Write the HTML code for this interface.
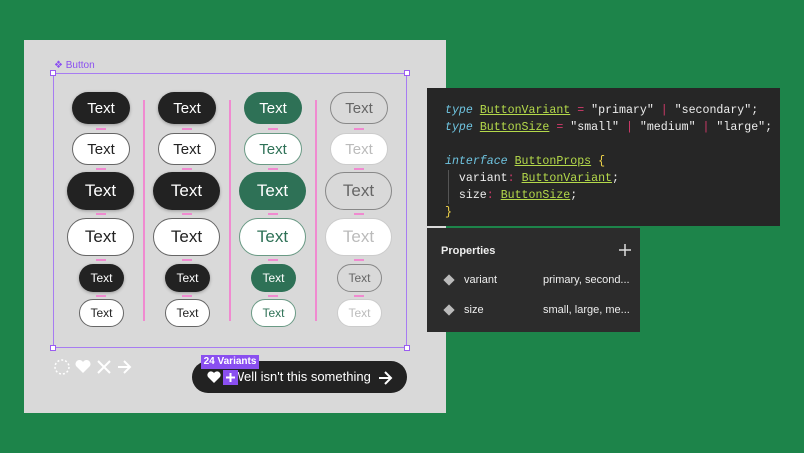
<!DOCTYPE html>
<html><head><style>
*{box-sizing:border-box;margin:0;padding:0}
body{width:804px;height:453px;background:#1d844a;position:relative;overflow:hidden;font-family:"Liberation Sans",sans-serif}
.abs{position:absolute}
.panel{left:24px;top:40px;width:422px;height:373px;background:#d9d9d9}
.b{position:absolute;display:flex;align-items:center;justify-content:center;border-radius:20px;font-size:14px}
.m{width:58px;height:32px;font-size:15px}
.l{width:67px;height:38px;font-size:17px;border-radius:20px}
.s{width:45px;height:28px;font-size:12px}
.d{background:#222;color:#fff;box-shadow:0 1px 3px rgba(0,0,0,.3)}
.w{background:#fff;color:#222;border:1.5px solid #666}
.g{background:#2e7156;color:#fff}
.gw{background:#fff;color:#2e7156;border:1.5px solid #6a9a85}
.o{background:transparent;color:#666;border:1.5px solid #888}
.ow{background:#fff;color:#bbb;border:1.5px solid #ccc}
.sep{width:2px;background:#f08ad0;top:100px;height:221px}
.dash{width:10px;height:2px;background:#f08ad0}
.code{left:427px;top:88px;width:353px;height:138px;background:#262626;font-family:"Liberation Mono",monospace;font-size:11.6px;color:#eee;padding:14px 0 0 18px;line-height:17px;white-space:pre}
.k{color:#6fc4e0;font-style:italic}.t{color:#b4d94a;text-decoration:underline}.p{color:#d23a6a}.y{color:#f2d54a}
.props{left:427px;top:228px;width:213px;height:104px;background:#2c2c2c;color:#eee;font-size:11px}
</style></head><body>
<div class="abs panel"></div>
<div class="abs" style="left:53px;top:73px;width:354px;height:275px;border:1px solid #a77cf2"></div>
<div class="abs" style="left:50px;top:70px;width:6px;height:6px;background:#fff;border:1px solid #9a5cf0"></div>
<div class="abs" style="left:404px;top:70px;width:6px;height:6px;background:#fff;border:1px solid #9a5cf0"></div>
<div class="abs" style="left:50px;top:345px;width:6px;height:6px;background:#fff;border:1px solid #9a5cf0"></div>
<div class="abs" style="left:404px;top:345px;width:6px;height:6px;background:#fff;border:1px solid #9a5cf0"></div>
<div class="abs" style="left:54px;top:60px;font-size:10px;color:#8a4ff0">❖ Button</div>

<div class="abs sep" style="left:143px"></div>
<div class="abs sep" style="left:229px"></div>
<div class="abs sep" style="left:315px"></div>

<div class="b m d" style="left:72px;top:92px">Text</div>
<div class="b m w" style="left:72px;top:133px">Text</div>
<div class="b l d" style="left:67px;top:172px">Text</div>
<div class="b l w" style="left:67px;top:218px">Text</div>
<div class="b s d" style="left:79px;top:264px">Text</div>
<div class="b s w" style="left:79px;top:299px">Text</div>
<div class="b m d" style="left:158px;top:92px">Text</div>
<div class="b m w" style="left:158px;top:133px">Text</div>
<div class="b l d" style="left:153px;top:172px">Text</div>
<div class="b l w" style="left:153px;top:218px">Text</div>
<div class="b s d" style="left:165px;top:264px">Text</div>
<div class="b s w" style="left:165px;top:299px">Text</div>
<div class="b m g" style="left:244px;top:92px">Text</div>
<div class="b m gw" style="left:244px;top:133px">Text</div>
<div class="b l g" style="left:239px;top:172px">Text</div>
<div class="b l gw" style="left:239px;top:218px">Text</div>
<div class="b s g" style="left:251px;top:264px">Text</div>
<div class="b s gw" style="left:251px;top:299px">Text</div>
<div class="b m o" style="left:330px;top:92px">Text</div>
<div class="b m ow" style="left:330px;top:133px">Text</div>
<div class="b l o" style="left:325px;top:172px">Text</div>
<div class="b l ow" style="left:325px;top:218px">Text</div>
<div class="b s o" style="left:337px;top:264px">Text</div>
<div class="b s ow" style="left:337px;top:299px">Text</div>

<div class="abs dash" style="left:96px;top:128px"></div><div class="abs dash" style="left:182px;top:128px"></div><div class="abs dash" style="left:268px;top:128px"></div><div class="abs dash" style="left:354px;top:128px"></div>
<div class="abs dash" style="left:96px;top:168px"></div><div class="abs dash" style="left:182px;top:168px"></div><div class="abs dash" style="left:268px;top:168px"></div><div class="abs dash" style="left:354px;top:168px"></div>
<div class="abs dash" style="left:96px;top:213px"></div><div class="abs dash" style="left:182px;top:213px"></div><div class="abs dash" style="left:268px;top:213px"></div><div class="abs dash" style="left:354px;top:213px"></div>
<div class="abs dash" style="left:96px;top:259px"></div><div class="abs dash" style="left:182px;top:259px"></div><div class="abs dash" style="left:268px;top:259px"></div><div class="abs dash" style="left:354px;top:259px"></div>
<div class="abs dash" style="left:96px;top:295px"></div><div class="abs dash" style="left:182px;top:295px"></div><div class="abs dash" style="left:268px;top:295px"></div><div class="abs dash" style="left:354px;top:295px"></div>

<svg class="abs" style="left:52px;top:355px" width="84" height="22" viewBox="0 0 84 22">
<circle cx="10" cy="12" r="7" fill="none" stroke="#fff" stroke-width="1.5" stroke-dasharray="2 2"/>
<path d="M31 18 L24 11 A3.5 3.5 0 0 1 31 7 A3.5 3.5 0 0 1 38 11 Z" fill="#fff"/>
<path d="M46 6 L58 18 M58 6 L46 18" stroke="#fff" stroke-width="2"/>
<path d="M66 12 H78 M72 6 L78 12 L72 18" stroke="#fff" stroke-width="2" fill="none"/>
</svg>

<div class="abs" style="left:192px;top:361px;width:215px;height:32px;background:#222;border-radius:16px"></div>
<svg class="abs" style="left:207px;top:371px" width="14" height="12" viewBox="0 0 14 12"><path d="M7 12 L1 6 A3 3 0 0 1 7 2 A3 3 0 0 1 13 6 Z" fill="#fff"/></svg>
<div class="abs" style="left:232px;top:369px;color:#fff;font-size:13px;white-space:nowrap">Well isn't this something</div>
<div class="abs" style="left:223px;top:370px;width:15px;height:15px;background:#8a4ff0"></div>
<svg class="abs" style="left:223px;top:370px" width="15" height="15"><path d="M7.5 3 V12 M3 7.5 H12" stroke="#fff" stroke-width="2"/></svg>
<svg class="abs" style="left:377px;top:370px" width="16" height="16"><path d="M2 8 H14 M8 2 L14 8 L8 14" stroke="#fff" stroke-width="2" fill="none"/></svg>
<div class="abs" style="left:201px;top:355px;width:58px;height:14px;background:#8a4ff0;color:#fff;font-size:10px;font-weight:bold;text-align:center;line-height:14px">24 Variants</div>

<div class="abs code"><span class="k">type</span> <span class="t">ButtonVariant</span> <span class="p">=</span> "primary" <span class="p">|</span> "secondary";
<span class="k">type</span> <span class="t">ButtonSize</span> <span class="p">=</span> "small" <span class="p">|</span> "medium" <span class="p">|</span> "large";

<span class="k">interface</span> <span class="t">ButtonProps</span> <span class="y">{</span>
  variant<span class="p">:</span> <span class="t">ButtonVariant</span>;
  size<span class="p">:</span> <span class="t">ButtonSize</span>;
<span class="y">}</span></div>
<div class="abs" style="left:448px;top:170px;width:1px;height:34px;background:#555"></div>

<div class="abs props">
<div class="abs" style="left:14px;top:17px;font-weight:bold">Properties</div>
<svg class="abs" style="left:192px;top:16px" width="12" height="12"><path d="M6 0 V12 M0 6 H12" stroke="#ddd" stroke-width="1.5"/></svg>
<div class="abs" style="left:18px;top:48px;width:8px;height:8px;background:#bbb;transform:rotate(45deg)"></div>
<div class="abs" style="left:37px;top:46px">variant</div>
<div class="abs" style="left:116px;top:46px">primary, second...</div>
<div class="abs" style="left:18px;top:78px;width:8px;height:8px;background:#bbb;transform:rotate(45deg)"></div>
<div class="abs" style="left:37px;top:76px">size</div>
<div class="abs" style="left:116px;top:76px">small, large, me...</div>
</div>
</body></html>
